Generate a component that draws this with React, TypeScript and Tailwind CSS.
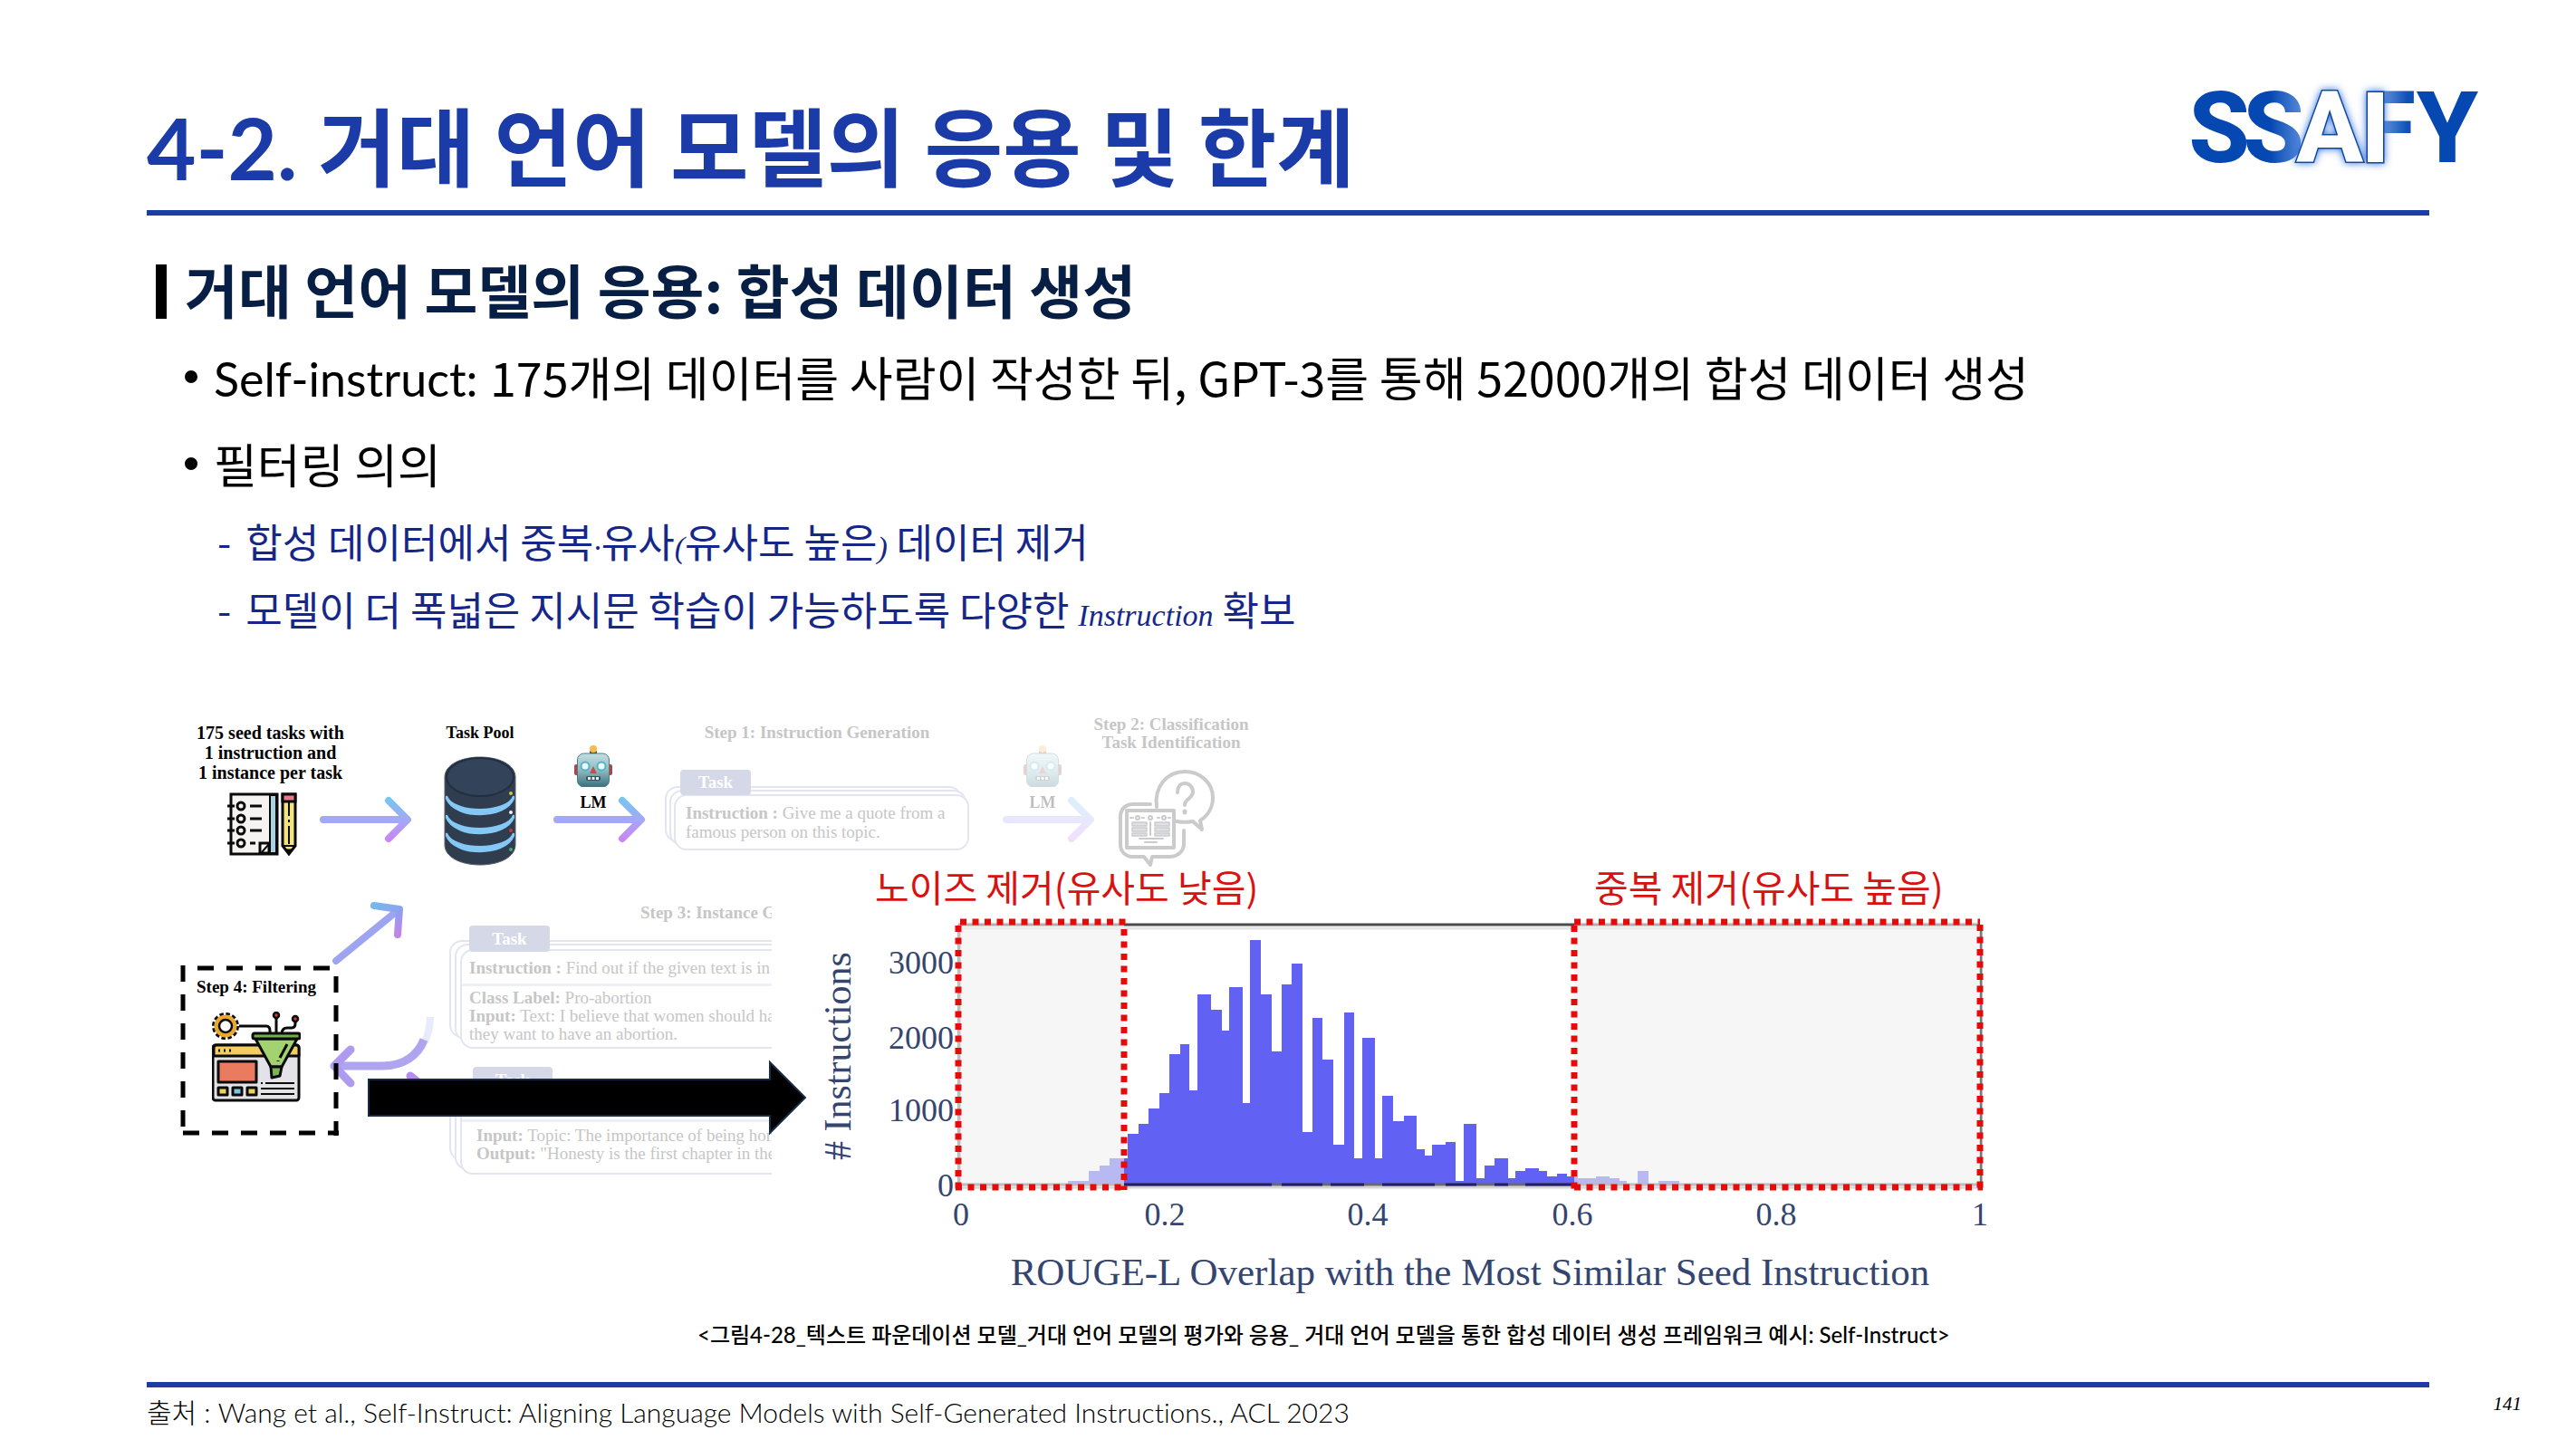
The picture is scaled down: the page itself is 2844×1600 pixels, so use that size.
import type { ReactNode } from "react";

const KR = "font-['Noto_Sans_CJK_KR',sans-serif]";
const MIXED = "font-[Lato,'Noto_Sans_CJK_KR',sans-serif] [font-variant-ligatures:none]";
const SERIF = "font-['Liberation_Serif',serif]";

/* Histogram bins: left edge, right edge, top edge (drawing units). */
const BARS: [number, number, number][] = [
  [989, 1012, 524], [1012, 1024, 513], [1024, 1035, 507], [1035, 1055, 499], [1055, 1067, 472],
  [1067, 1078, 461], [1078, 1090, 444], [1090, 1101, 427], [1101, 1113, 384], [1113, 1123, 373],
  [1123, 1132, 424], [1132, 1147, 318], [1147, 1159, 335], [1159, 1167, 358], [1167, 1182, 310],
  [1182, 1190, 438], [1190, 1202, 258], [1202, 1214, 318], [1214, 1225, 381], [1225, 1236, 307],
  [1236, 1248, 284], [1248, 1259, 470], [1259, 1270, 344], [1270, 1282, 390], [1282, 1294, 484],
  [1294, 1305, 338], [1305, 1314, 499], [1314, 1328, 366], [1328, 1336, 499], [1336, 1348, 430],
  [1348, 1360, 458], [1360, 1374, 452], [1374, 1383, 489], [1383, 1391, 496], [1391, 1406, 484],
  [1406, 1417, 481], [1417, 1426, 524], [1426, 1440, 461], [1440, 1449, 521], [1449, 1460, 507],
  [1460, 1475, 499], [1475, 1483, 521], [1483, 1494, 513], [1494, 1509, 510], [1509, 1518, 513],
  [1518, 1529, 519], [1529, 1540, 516], [1540, 1552, 519], [1552, 1572, 521], [1572, 1587, 519],
  [1587, 1598, 521], [1598, 1606, 524], [1618, 1630, 513], [1641, 1664, 524],
];

const X_TICKS: [number, string][] = [
  [871, "0"], [1096, "0.2"], [1320, "0.4"], [1546, "0.6"], [1771, "0.8"], [1996, "1"],
];
const Y_TICKS: [number, string][] = [
  [295, "3000"], [378, "2000"], [458, "1000"], [541, "0"],
];

function Logo() {
  return (
    <svg viewBox="0 -20 340 150" className="h-[150px] w-[340px] shrink-0" role="img" aria-label="SSAFY">
      <defs>
        <linearGradient id="lgS" x1="0" x2="1">
          <stop offset="0.45" stopColor="#0648b2" />
          <stop offset="1" stopColor="#5c8fdd" />
        </linearGradient>
        <linearGradient id="lgF" x1="0" x2="1">
          <stop offset="0.25" stopColor="#7ea6e6" />
          <stop offset="0.85" stopColor="#0f50b6" />
        </linearGradient>
        <filter id="glow" x="-30%" y="-30%" width="160%" height="160%">
          <feDropShadow dx="0" dy="0" stdDeviation="4" floodColor="#2f6fe0" />
        </filter>
      </defs>
      <g fontSize="109" fontWeight="800" textAnchor="middle" className="font-[Roboto,sans-serif]">
        <text x="40" y="95" fill="#0648b2">S</text>
        <text x="100" y="95" fill="url(#lgS)">S</text>
        <text x="227" y="95" fill="url(#lgF)">F</text>
        <text x="292" y="95" fill="#0648b2">Y</text>
        <g filter="url(#glow)" fill="#fff" stroke="#0d4a9c" strokeWidth="3" paintOrder="stroke">
          <text x="162" y="95">A</text>
          <rect x="204" y="18" width="17" height="77" />
        </g>
      </g>
    </svg>
  );
}

function Robot({ className }: { className: string }) {
  return (
    <svg viewBox="0 0 42 46" className={`h-[46px] w-[42px] shrink-0 ${className}`} aria-hidden="true">
      <defs>
        <linearGradient id="face" x1="0" y1="0" x2="0" y2="1">
          <stop offset="0" stopColor="#c3dfe2" />
          <stop offset="0.5" stopColor="#8fbac2" />
          <stop offset="1" stopColor="#386f7d" />
        </linearGradient>
      </defs>
      <rect x="17" y="6" width="8" height="5" rx="1" fill="#5a3f5e" />
      <circle cx="21" cy="4" r="4" fill="#f5bd45" />
      <rect x="0" y="21" width="5" height="12" rx="2" fill="#a9474a" />
      <rect x="37" y="21" width="5" height="12" rx="2" fill="#a9474a" />
      <rect x="3.5" y="9" width="35" height="37" rx="7" fill="url(#face)" stroke="#4c7d88" strokeWidth="1" />
      <circle cx="12" cy="23" r="5.5" fill="#4fb4cc" />
      <circle cx="12" cy="23" r="3.5" fill="#eafcff" />
      <circle cx="30" cy="23" r="5.5" fill="#4fb4cc" />
      <circle cx="30" cy="23" r="3.5" fill="#eafcff" />
      <path d="M21 23l4 8h-8z" fill="#c0504d" />
      <rect x="13" y="34" width="16" height="5" rx="2" fill="#37525c" />
      <path d="M15 36.5h3M19.5 36.5h3M24 36.5h3" stroke="#e8f2f4" strokeWidth="3" />
    </svg>
  );
}

function Arrow({ className = "" }: { className?: string }) {
  return (
    <svg viewBox="0 0 102 54" className={`h-[54px] w-[102px] shrink-0 ${className}`} fill="none" aria-hidden="true">
      <defs>
        <linearGradient id="arr" gradientUnits="userSpaceOnUse" x1="0" y1="4" x2="0" y2="50">
          <stop offset="0" stopColor="#74c6f2" />
          <stop offset="0.5" stopColor="#a4a8f7" />
          <stop offset="1" stopColor="#cb84f4" />
        </linearGradient>
      </defs>
      <path d="M4 27H94" stroke="#a4a8f8" strokeWidth="8" strokeLinecap="round" />
      <path d="M76 6L97 27L76 48" stroke="url(#arr)" strokeWidth="8" strokeLinecap="round" strokeLinejoin="round" />
    </svg>
  );
}

function Notebook({ className }: { className: string }) {
  return (
    <svg viewBox="0 0 78 70" className={`h-[70px] w-[78px] ${className}`} fill="none" stroke="#0a0a0a" aria-hidden="true">
      <rect x="4" y="2" width="51" height="66" fill="#f6f3f3" strokeWidth="3" />
      <rect x="47" y="3" width="7" height="64" fill="#a9d3e0" strokeWidth="2" />
      <path d="M36 67V56h10V67z" fill="#fff" strokeWidth="3" />
      <path d="M38 66l8-9" strokeWidth="2" />
      {[15, 29, 42, 56].map((y) => (
        <g key={y}>
          <path d={`M0 ${y}H8`} strokeWidth="3" />
          <circle cx="15" cy={y} r="4" strokeWidth="3" />
          <path d={`M25 ${y}H${y === 56 ? 31 : 38}`} strokeWidth="3" />
        </g>
      ))}
      <path d="M61 2h14v57l-7 9l-7-9z" fill="#f3e37c" strokeWidth="3" />
      <path d="M61 2h14v8H61z" fill="#e8798b" strokeWidth="3" />
      <path d="M68 11v15M68 30v3M68 37v20M61 59h14" strokeWidth="2" />
      <path d="M65 63h6l-3 5z" fill="#0a0a0a" />
    </svg>
  );
}

function Cylinder({ className }: { className: string }) {
  return (
    <svg viewBox="0 0 80 122" className={`h-[122px] w-[80px] ${className}`} fill="none" aria-hidden="true">
      <path d="M1 23C1 10 18 1 40 1s39 9 39 22v75c0 13-17 22-39 22S1 111 1 98z" fill="#2f3d4f" stroke="#57616e" />
      <ellipse cx="40" cy="23" rx="37" ry="21" fill="#33435a" stroke="#222f40" strokeWidth="2" />
      {[44, 65, 85].map((y) => (
        <path
          key={y}
          d={`M3 ${y}C10 ${y + 20} 70 ${y + 20} 77 ${y}v3C68 ${y + 26} 12 ${y + 26} 3 ${y + 3}z`}
          fill="#86c8f5"
          stroke="#86c8f5"
          strokeWidth="2"
        />
      ))}
      <circle cx="74" cy="41" r="2" fill="#d8c340" />
      <circle cx="74" cy="62" r="2" fill="#f2f2f2" />
      <circle cx="74" cy="82" r="2" fill="#c9393c" />
      <circle cx="74" cy="103" r="2" fill="#3fae74" />
    </svg>
  );
}

function QuestionIcon({ className }: { className: string }) {
  return (
    <svg viewBox="0 0 108 108" className={`h-[108px] w-[108px] ${className}`} fill="none" stroke="#cbcbcb" strokeWidth="4" strokeLinecap="round" strokeLinejoin="round" aria-hidden="true">
      <path d="M43 42C40 20 54 3 74 3c18 0 31 13 31 29 0 11-6 20-14 25l2 10-10-9c-6 1-13 1-18 0" />
      <path d="M36 39H17C8 39 3 45 3 53v30c0 9 6 14 14 14h12l7 9 2-9h19c9 0 16-6 16-14V68" />
      <rect x="10" y="46" width="52" height="41" strokeWidth="4" />
      <path d="M66 26c0-6 3-10 8-10s9 4 9 9c0 8-9 8-9 15" strokeWidth="4" />
      <path d="M74 47v1" strokeWidth="5" />
      <path d="M14 54h3M27 54h2M44 54h2M56 54h2" strokeWidth="2" />
      <circle cx="22" cy="54" r="2" strokeWidth="2" />
      <circle cx="36" cy="54" r="2" strokeWidth="2" />
      <circle cx="51" cy="54" r="2" strokeWidth="2" />
      <path d="M36 59v14M24 77h26M30 81h13" strokeWidth="2" />
      <path d="M16 59h16v4H16zM16 65h16v4H16zM16 71h16v3H16zM41 59h16v4H41zM41 65h16v4H41zM41 71h16v3H41z" strokeWidth="1.5" fill="#dfe1ea" />
    </svg>
  );
}

function FilterIcon() {
  return (
    <svg viewBox="0 0 98 100" className="h-[100px] w-[98px]" fill="none" stroke="#0a0a0a" strokeLinejoin="round" aria-hidden="true">
      <rect x="1" y="37" width="95" height="61" rx="3" fill="#e3e3e7" strokeWidth="3" />
      <path d="M2 49V40q0-3 3-3h88q3 0 3 3v9z" fill="#f4cd60" strokeWidth="3" />
      <path d="M7 43h2M13 43h2M19 43h2" strokeWidth="3" />
      <rect x="7" y="55" width="42" height="23" fill="#ea7b61" strokeWidth="3" />
      <rect x="7" y="84" width="10" height="8" fill="#f4cd60" strokeWidth="3" />
      <rect x="23" y="84" width="10" height="8" fill="#7cc3e6" strokeWidth="3" />
      <rect x="39" y="84" width="10" height="8" fill="#f4cd60" strokeWidth="3" />
      <path d="M54 79h2M59 79h32M54 85h37M54 91h37" strokeWidth="2" />
      <circle cx="15" cy="16" r="12" fill="#eaa92c" strokeWidth="6" strokeDasharray="4 2.28" />
      <circle cx="15" cy="16" r="11" fill="#eaa92c" stroke="#eaa92c" strokeWidth="3" />
      <circle cx="15" cy="16" r="7" fill="#fff" strokeWidth="2.5" />
      <path d="M30 16h30q4 0 4 5v4M71 25V6M77 25q0-7 6-7h5q4 0 4-5V9" strokeWidth="3" />
      <circle cx="71" cy="4" r="3" fill="#c2413c" strokeWidth="2.5" />
      <circle cx="92" cy="8" r="3" fill="#c2413c" strokeWidth="2.5" />
      <path d="M48 30H94L77 61H65z" fill="#a2d36f" strokeWidth="3" />
      <path d="M65 61h12l-2 10-9 2z" fill="#7bb450" strokeWidth="3" />
      <rect x="45" y="24" width="52" height="6" rx="2" fill="#6fae4b" strokeWidth="3" />
      <path d="M83 36l-8 15M73 54v1" strokeWidth="3" />
    </svg>
  );
}

/* Links between nodes, the Step 4 frame and the large pointer towards the chart. */
function Connectors() {
  return (
    <svg viewBox="0 0 720 320" className="absolute top-[200px] left-0 h-[320px] w-[720px]" fill="none" aria-hidden="true">
      <defs>
        <linearGradient id="diag" gradientUnits="userSpaceOnUse" x1="226" y1="18" x2="252" y2="54">
          <stop offset="0" stopColor="#74b8ee" />
          <stop offset="0.5" stopColor="#929ff0" />
          <stop offset="1" stopColor="#c980e6" />
        </linearGradient>
      </defs>
      <path d="M181 81L247 27" stroke="#9da5f1" strokeWidth="8" strokeLinecap="round" />
      <path d="M223 20L251 24L249 52" stroke="url(#diag)" strokeWidth="8" strokeLinecap="round" strokeLinejoin="round" />
      <path d="M285 143C284 176 266 197 232 197" stroke="#e8ebfb" strokeWidth="8" />
      <path d="M278 168C271 186 255 197 232 197H181" stroke="#aea4f0" strokeWidth="9" />
      <path d="M197 179L179 197L197 216" stroke="#ae9bf0" strokeWidth="9" strokeLinecap="round" strokeLinejoin="round" />
      <path d="M263 208L274 217" stroke="#b38ef0" strokeWidth="9" strokeLinecap="round" />
      <path d="M12 86V274" stroke="#000" strokeWidth="5" strokeDasharray="18 14" />
      <path d="M181 98V274" stroke="#000" strokeWidth="5" strokeDasharray="18 14" />
      <path d="M28 89H180" stroke="#000" strokeWidth="5" strokeDasharray="18 14" />
      <path d="M12 271H184" stroke="#000" strokeWidth="5" strokeDasharray="18 14" />
      <path d="M217 212H660V193L699 232L660 271V252H217z" fill="#000" stroke="#172a46" strokeWidth="2" />
    </svg>
  );
}

function Tab({ className }: { className: string }) {
  return (
    <div className={`absolute flex items-center justify-center rounded bg-[#d5d8e7] text-[19px] leading-[20px] font-bold text-white ${className}`}>
      Task
    </div>
  );
}

function Sheet({ className, children }: { className: string; children?: ReactNode }) {
  return (
    <div className={`absolute rounded-[14px] border-2 border-[#e3e6f1] bg-white ${className}`}>{children}</div>
  );
}

function Label({ className = "", children }: { className?: string; children: ReactNode }) {
  return (
    <div className={`text-center text-[19px] leading-[20px] font-bold whitespace-nowrap ${className}`}>{children}</div>
  );
}

/* Arrow with the language-model mark above it. */
function ModelStep({ className }: { className: string }) {
  return (
    <div className={`flex w-[102px] flex-col pt-[43px] ${className}`}>
      <Robot className="ml-[23px]" />
      <Label className="mt-[7px] w-[88px] text-[18px]!">LM</Label>
      <Arrow className="-mt-[18px]" />
    </div>
  );
}

function TopRow() {
  return (
    <div className="flex items-start pl-[27px]">
      <div className="w-[163px] pt-[18px]">
        <Label className="text-[20px]! leading-[22px]!">
          175 seed tasks with
          <br />1 instruction and
          <br />1 instance per task
        </Label>
        <Notebook className="mt-[11px] ml-[34px]" />
      </div>
      <Arrow className="mt-[98px] -ml-[27px]" />
      <div className="ml-[35px] w-[80px] pt-[19px]">
        <Label className="text-[18px]!">Task Pool</Label>
        <Cylinder className="mt-[16px]" />
      </div>
      <ModelStep className="ml-[41px]" />
      <div className="ml-[21px] w-[336px] pt-[19px] text-[#c6c6c6]">
        <Label>Step 1: Instruction Generation</Label>
        <div className="relative mt-[49px] h-[71px]">
          <Sheet className="top-0 left-0 h-[62px] w-[328px]" />
          <Sheet className="top-[4px] left-[5px] h-[62px] w-[328px]" />
          <Sheet className="top-[9px] left-[10px] h-[62px] w-[326px] py-[8px] pl-[11px] text-[19px] leading-[21px] whitespace-nowrap">
            <b>Instruction :</b> Give me a quote from a
            <br />
            famous person on this topic.
          </Sheet>
          <Tab className="-top-[18px] left-[17px] h-[28px] w-[78px]" />
        </div>
      </div>
      <ModelStep className="ml-[37px] opacity-25" />
      <div className="-ml-[6px] w-[180px] pt-[10px] text-[#c6c6c6]">
        <Label>
          Step 2: Classification
          <br />
          Task Identification
        </Label>
        <QuestionIcon className="mt-[19px] ml-[31px]" />
      </div>
    </div>
  );
}

function Pipeline() {
  return (
    <div className={SERIF}>
      <TopRow />
      <div className="absolute top-[215px] left-[300px] h-[310px] w-[362px] overflow-hidden text-[19px] leading-[20px] whitespace-nowrap text-[#c6c6c6]">
        <Label className="absolute top-[3px] left-[217px]">Step 3: Instance Generation</Label>
        <Sheet className="top-[43px] left-[6px] h-[108px] w-[400px]" />
        <Sheet className="top-[47px] left-[12px] h-[108px] w-[400px]" />
        <Sheet className="top-[53px] left-[18px] h-[110px] w-[400px] pt-[9px]">
          <p className="pl-[8px]">
            <b>Instruction :</b> Find out if the given text is in favor
          </p>
          <div className="mt-[7px] mb-[3px] h-[3px] bg-[#eef0f8]" />
          <p className="pl-[8px]">
            <b>Class Label:</b> Pro-abortion
            <br />
            <b>Input:</b> Text: I believe that women should have
            <br />
            they want to have an abortion.
          </p>
        </Sheet>
        <Tab className="top-[27px] left-[28px] h-[29px] w-[89px]" />
        <Sheet className="top-[199px] left-[6px] h-[88px] w-[400px]" />
        <Sheet className="top-[203px] left-[12px] h-[94px] w-[400px]" />
        <Sheet className="top-[209px] left-[18px] h-[93px] w-[400px] pt-[30px]">
          <div className="mb-[5px] h-[3px] bg-[#eef0f8]" />
          <p className="pl-[16px]">
            <b>Input:</b> Topic: The importance of being honest
            <br />
            <b>Output:</b> &quot;Honesty is the first chapter in the book
          </p>
        </Sheet>
        <Tab className="top-[183px] left-[32px] h-[29px] w-[88px]" />
      </div>

      <Connectors />
      <div className="absolute top-[286px] left-[10px] flex w-[174px] flex-col items-center gap-[17px] pt-[14px] pr-[8px]">
        <Label>Step 4: Filtering</Label>
        <FilterIcon />
      </div>
    </div>
  );
}

function Histogram() {
  return (
    <svg
      viewBox="700 165 1320 495"
      className={`absolute top-[165px] left-[700px] h-[495px] w-[1320px] ${SERIF}`}
      role="img"
      aria-label="Histogram of ROUGE-L overlap with the most similar seed instruction"
    >
      <path d="M868 245H1996" stroke="#e4e4e4" strokeWidth="3" />
      <path d="M868 241H1996" stroke="#4a4a4a" strokeWidth="3" />
      <path d="M1997 241V530M869 241V530" stroke="#777" strokeWidth="3" />
      <g fill="#6161f4" shapeRendering="crispEdges">
        {BARS.map(([x0, x1, top]) => (
          <rect key={x0} x={x0} y={top} width={x1 - x0} height={528 - top} />
        ))}
      </g>
      <path d="M868 531H1996" stroke="#d4d4d4" strokeWidth="3" />
      <path d="M868 528H1996" stroke="#6a6a6a" strokeWidth="3" />
      <path d="M1051 528H1214M1225 528H1270M1279 528H1316M1336 528H1394M1406 528H1440M1460 528H1475M1494 528H1548" stroke="#221d6e" strokeWidth="3" />
      <rect x="868" y="238" width="183" height="293" fill="#f0f0f0" fillOpacity="0.61" />
      <rect x="1548" y="238" width="448" height="293" fill="#f0f0f0" fillOpacity="0.61" />
      <g fill="none" stroke="#e60b0b" strokeWidth="7" strokeDasharray="7 6.5">
        <path d="M870 238H1054M868 242V534M1051 246V534M865 531H1054" />
        <path d="M1548 238H1996M1548 242V534M1996 241V534M1548 531H1999" />
      </g>
      <g fill="#34456f" fontSize="36">
        {Y_TICKS.map(([y, t]) => (
          <text key={t} x="863" y={y} textAnchor="end">{t}</text>
        ))}
        {X_TICKS.map(([x, t]) => (
          <text key={t} x={x} y="573" textAnchor="middle">{t}</text>
        ))}
      </g>
      <g fill="#34456f" textAnchor="middle">
        <text x="1433" y="639" fontSize="43">ROUGE-L Overlap with the Most Similar Seed Instruction</text>
        <text transform="translate(749 386) rotate(-90)" fontSize="42"># Instructions</text>
      </g>
      <g fill="#d9110f" fontSize="41" className={KR}>
        <text x="776" y="216">노이즈 제거(유사도 낮음)</text>
        <text x="1570" y="216">중복 제거(유사도 높음)</text>
      </g>
    </svg>
  );
}

function SerifRun({ children }: { children: ReactNode }) {
  return <i className={`text-[34px] leading-[0] ${SERIF}`}>{children}</i>;
}

export default function App() {
  return (
    <div className={`flex min-h-screen flex-col overflow-x-hidden bg-white text-black ${KR}`}>
      <header className="flex items-start justify-between pt-[64px] pr-[94px] pl-[162px]">
        <h1 className="mt-[34px] h-[120px] text-[94px] leading-[120px] font-bold whitespace-nowrap text-[#1a3ba8]">
          <span className={`leading-[0] ${MIXED}`}>4-2. </span>거대 언어 모델의 응용 및 한계
        </h1>
        <Logo />
      </header>
      <div className="mx-[162px] mt-[14px] h-[6px] bg-[#1d3ca6]" />

      <main className="flex grow flex-col pl-[172px]">
        <h2 className="mt-[40px] flex items-start gap-[20px] text-[64px] leading-[80px] font-bold whitespace-nowrap text-[#071f45]">
          <span className="mt-[14px] h-[60px] w-[12px] bg-black" />
          거대 언어 모델의 응용: 합성 데이터 생성
        </h2>
        <ul className="mt-[10px] pl-[32px] text-[52px] leading-[96px]">
          <li className="flex items-center gap-[18px] whitespace-nowrap">
            <span className="size-[14px] shrink-0 rounded-full bg-black" />
            <span>
              <span className={`leading-[0] ${MIXED}`}>Self-instruct: </span>
              175개의 데이터를 사람이 작성한 뒤, GPT-3를 통해 52000개의 합성 데이터 생성
            </span>
          </li>
          <li>
            <div className="flex items-center gap-[18px] whitespace-nowrap">
              <span className="size-[14px] shrink-0 rounded-full bg-black" />
              필터링 의의
            </div>
            <ul className="pl-[36px] text-[44px] leading-[75px] whitespace-nowrap text-[#16278a]">
              <li className="flex gap-[16px]">
                <span>-</span>
                <span>
                  합성 데이터에서 중복<SerifRun>·</SerifRun>유사<SerifRun>(</SerifRun>유사도 높은
                  <SerifRun>)</SerifRun> 데이터 제거
                </span>
              </li>
              <li className="flex gap-[16px]">
                <span>-</span>
                <span>
                  모델이 더 폭넓은 지시문 학습이 가능하도록 다양한 <SerifRun>Instruction</SerifRun> 확보
                </span>
              </li>
            </ul>
          </li>
        </ul>

        <figure className="mt-[70px] pl-[18px]">
          <div className="relative h-[670px]">
            <Pipeline />
            <Histogram />
          </div>
          <figcaption className={`pl-[580px] text-[24px] leading-[48px] font-medium whitespace-nowrap text-black ${MIXED}`}>
            &lt;그림4-28_텍스트 파운데이션 모델_거대 언어 모델의 평가와 응용_ 거대 언어 모델을 통한 합성 데이터 생성 프레임워크 예시: Self-Instruct&gt;
          </figcaption>
        </figure>
      </main>

      <footer className="pb-[16px] pl-[162px]">
        <div className="mr-[162px] h-[6px] bg-[#1d3ca6]" />
        <div className="flex items-start justify-between pr-[60px]">
          <p className={`pt-[4px] pb-[2px] text-[30px] leading-[46px] font-light whitespace-nowrap text-black ${MIXED}`}>
            출처 : Wang et al., Self-Instruct: Aligning Language Models with Self-Generated Instructions., ACL 2023
          </p>
          <span className={`pt-[6px] text-[21px] leading-[24px] italic ${SERIF}`}>141</span>
        </div>
      </footer>
    </div>
  );
}
